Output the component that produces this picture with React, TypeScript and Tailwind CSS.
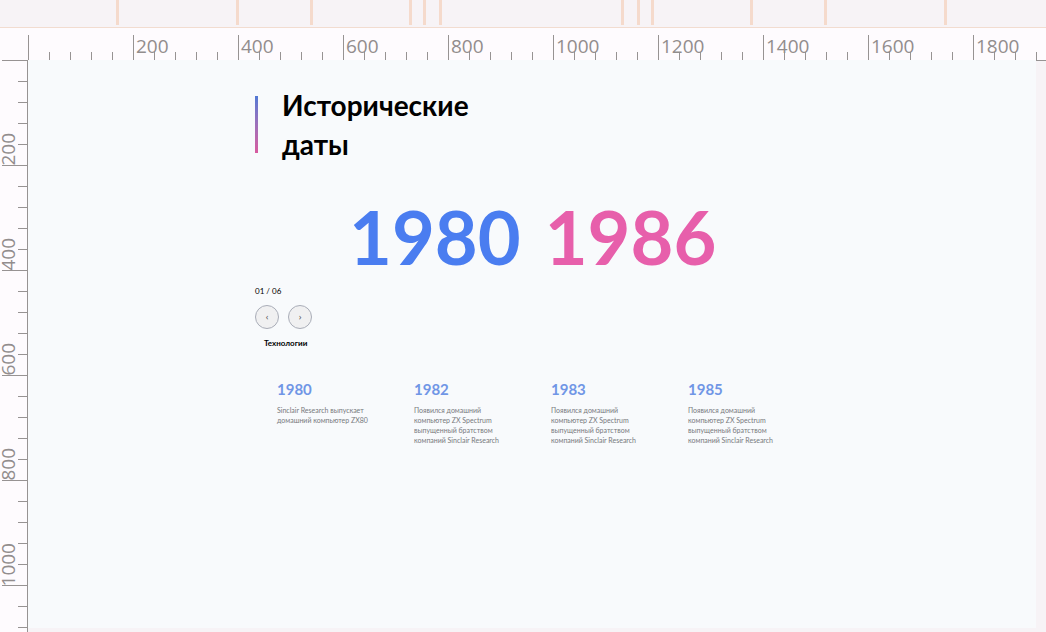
const GUIDES = [116, 236, 310, 409, 423, 439, 621, 637, 651, 750, 824, 944];
const COLUMN_MARKS = ["", "200", "400", "600", "800", "1000", "1200", "1400", "1600", "1800"];
const ROW_MARKS = ["200", "400", "600", "800", "1000", ""];
const SPECTRUM = ["Появился домашний", "компьютер ZX Spectrum", "выпущенный братством", "компаний Sinclair Research"];
const EVENTS = [
  { year: "1980", lines: ["Sinclair Research выпускает", "домашний компьютер ZX80"] },
  { year: "1982", lines: SPECTRUM },
  { year: "1983", lines: SPECTRUM },
  { year: "1985", lines: SPECTRUM },
];

function Guides() {
  return (
    <div className="h-7 shrink-0 border-b border-[#f2dcd0] bg-[#f7f3f6]">
      <svg className="block h-[25px] w-full" aria-hidden="true">
        {GUIDES.map((x) => (
          <rect key={x} x={x} y="0" width="3" height="25" fill="#f5dacc" />
        ))}
      </svg>
    </div>
  );
}

function ColumnRuler() {
  return (
    <div className="flex h-8 shrink-0 overflow-hidden bg-[#fefbfe] pl-7">
      {COLUMN_MARKS.map((mark, i) => (
        <div key={i} className="relative flex w-[105px] shrink-0 items-end">
          <span className="h-[25px] w-[21px] border-l border-[#979393]" />
          <span className="h-2 w-[21px] border-l border-[#979393]" />
          <span className="h-2 w-[21px] border-l border-[#979393]" />
          <span className="h-2 w-[21px] border-l border-[#979393]" />
          <span className="h-2 w-[21px] border-l border-[#979393]" />
          <span className="absolute top-2 left-[3px] text-[19px] leading-5 text-[#928d8d]">{mark}</span>
        </div>
      ))}
    </div>
  );
}

function RowRuler() {
  return (
    <div className="flex w-7 shrink-0 flex-col border-r border-[#979393] bg-[#fefbfe]">
      {ROW_MARKS.map((mark, i) => (
        <div key={i} className="relative flex h-[105px] shrink-0 flex-col items-end">
          <span className="h-[21px] w-[25px] border-t border-[#979393]" />
          <span className="h-[21px] w-[9px] border-t border-[#979393]" />
          <span className="h-[21px] w-[9px] border-t border-[#979393]" />
          <span className="h-[21px] w-[9px] border-t border-[#979393]" />
          <span className="h-[21px] w-[9px] border-t border-[#979393]" />
          {mark && (
            <span className="absolute -bottom-px left-0 rotate-180 text-[19px] leading-4 text-[#928d8d] [writing-mode:vertical-rl]">
              {mark}
            </span>
          )}
        </div>
      ))}
    </div>
  );
}

export default function App() {
  return (
    <div className="flex h-screen flex-col overflow-hidden bg-[#f7f3f6] font-['Open_Sans','Noto_Sans',sans-serif]">
      <Guides />
      <ColumnRuler />
      <div className="flex min-h-0 grow">
        <RowRuler />
        <main className="mb-1 grow bg-[#f8fafc] pt-[26px] pl-[227px] font-['Lato','Noto_Sans',sans-serif] text-black">
          <header className="flex items-start">
            <span className="mt-[10px] h-[57px] w-[3px] bg-linear-to-b from-[#5078d4] to-[#d85a9f]" />
            <h1 className="ml-6 text-[28px] leading-[39px] font-bold">
              Исторические
              <br />
              даты
            </h1>
          </header>
          <div className="mt-[23px] ml-[94px] flex h-[100px] items-center gap-6 text-[74px] leading-none font-bold">
            <span className="text-[#4a7df0]">1980</span>
            <span className="text-[#e75fab]">1986</span>
          </div>
          <p className="mt-[-2px] h-3 text-[8px] leading-3">01 / 06</p>
          <div className="mt-2 flex gap-[9px]">
            <button
              type="button"
              aria-label="Назад"
              className="flex size-6 items-center justify-center rounded-full border border-[#a9adb8] bg-[#f0f0f1] font-['Open_Sans',sans-serif] text-[9px] text-[#555]"
            >
              ‹
            </button>
            <button
              type="button"
              aria-label="Вперёд"
              className="flex size-6 items-center justify-center rounded-full border border-[#a9adb8] bg-[#f0f0f1] font-['Open_Sans',sans-serif] text-[9px] text-[#555]"
            >
              ›
            </button>
          </div>
          <h2 className="mt-2 ml-[9px] text-[8px] leading-3 font-bold">Технологии</h2>
          <div className="mt-[30px] ml-[22px] flex">
            {EVENTS.map((event) => (
              <article key={event.year} className="w-[137px]">
                <h3 className="text-[15px] leading-5 font-bold text-[#7096e6]">{event.year}</h3>
                <p className="mt-[6px] text-[7px] leading-[10px] text-[#77797c]">
                  {event.lines.map((line) => (
                    <span key={line} className="block whitespace-nowrap">
                      {line}
                    </span>
                  ))}
                </p>
              </article>
            ))}
          </div>
        </main>
        <div className="w-[10px] shrink-0 border-t border-[#979393]" />
      </div>
    </div>
  );
}
